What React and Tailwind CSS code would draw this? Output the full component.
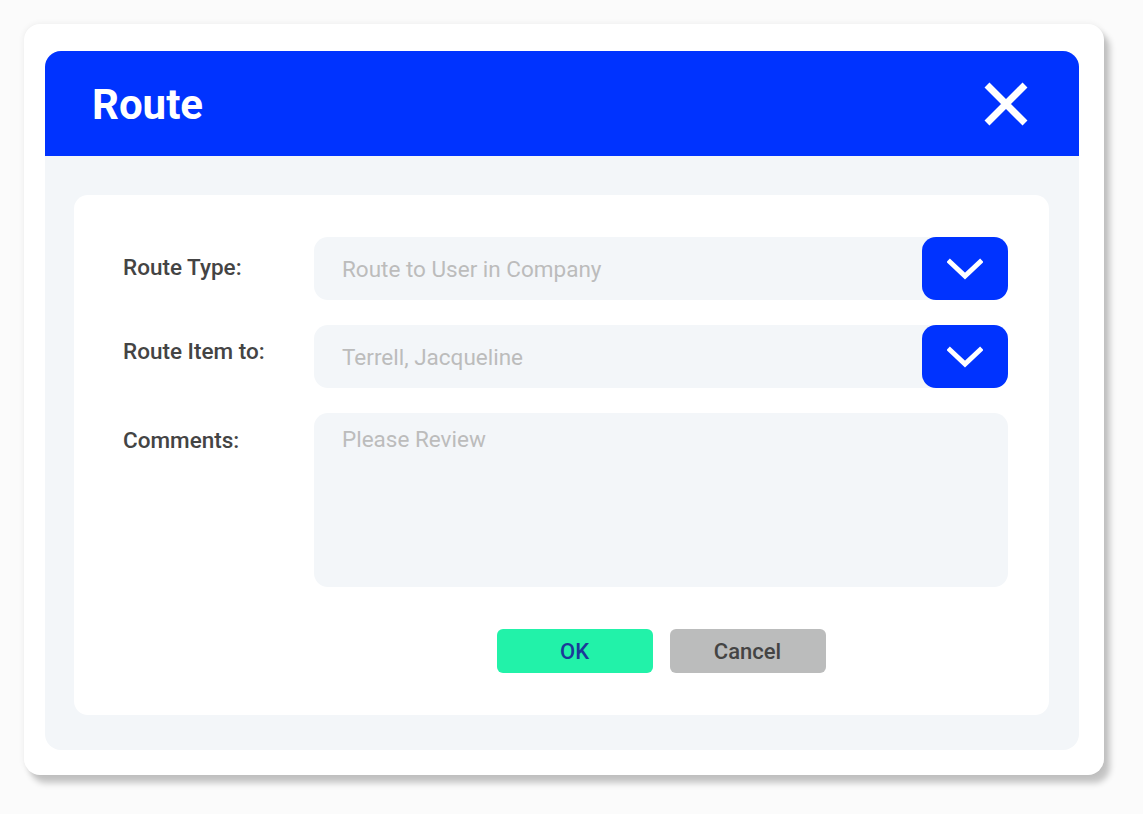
const Chevron = () => (
    <svg width="36" height="22" viewBox="0 0 36 22" fill="none">
        <path d="M3 4 L18 18 L33 4" stroke="white" strokeWidth="5" strokeLinecap="square" />
    </svg>
);

const SelectField = ({ value }) => {
    return (
        <div className="flex h-[63px] flex-1 items-center rounded-[14px] bg-[#f3f6f9]">
            <span className="flex-1 pl-[28px] pt-[3px] text-[22.5px] text-[#bcbcbc]">{value}</span>
            <button className="flex h-[63px] w-[86px] items-center justify-center rounded-[14px] bg-[#0033ff]">
                <Chevron />
            </button>
        </div>
    );
};

const Row = ({ label, pad, children }) => (
    <div className="flex items-start">
        <div className={`w-[191px] shrink-0 text-[22.5px] font-medium leading-[26px] text-[#444] ${pad}`}>{label}</div>
        {children}
    </div>
);

const App = () => {
    return (
        <div className="min-h-screen bg-[#fbfbfb] pl-[24px] pt-[24px]" style={{ fontFamily: 'Roboto, "Liberation Sans", sans-serif' }}>
            <div className="w-[1080px] rounded-[16px] bg-white pb-[25px] pl-[21px] pr-[25px] pt-[27px] shadow-[0_0_6px_rgba(0,0,0,0.07),6px_8px_6px_rgba(0,0,0,0.22)]">
                <div className="overflow-hidden rounded-[16px] bg-[#f3f6f9]">
                    <div className="flex h-[105px] items-center justify-between bg-[#0033ff] pl-[47px] pr-[50px]">
                        <h1 className="pt-[2px] text-[42px] font-bold text-white">Route</h1>
                        <svg width="46" height="46" viewBox="0 0 46 46">
                            <path d="M4 4 L42 42 M42 4 L4 42" stroke="white" strokeWidth="7" />
                        </svg>
                    </div>
                    <div className="pb-[35px] pl-[29px] pr-[30px] pt-[39px]">
                        <div className="rounded-[14px] bg-white pb-[42px] pl-[49px] pr-[41px] pt-[42px]">
                            <div className="flex flex-col gap-[25px]">
                                <Row label="Route Type:" pad="pt-[17px]">
                                    <SelectField value="Route to User in Company" />
                                </Row>
                                <Row label="Route Item to:" pad="pt-[13px]">
                                    <SelectField value="Terrell, Jacqueline" />
                                </Row>
                                <Row label="Comments:" pad="pt-[14px]">
                                    <div className="h-[174px] flex-1 rounded-[14px] bg-[#f3f6f9] pl-[28px] pt-[13px] text-[22.5px] leading-[26px] text-[#bcbcbc]">
                                        Please Review
                                    </div>
                                </Row>
                            </div>
                            <div className="ml-[191px] mt-[42px] flex justify-center gap-[17px]">
                                <button className="h-[44px] w-[156px] rounded-[6px] bg-[#22f2a9] text-[22px] font-medium text-[#1b3a98]">OK</button>
                                <button className="h-[44px] w-[156px] rounded-[6px] bg-[#bbbcbc] text-[22px] font-medium text-[#444]">Cancel</button>
                            </div>
                        </div>
                    </div>
                </div>
            </div>
        </div>
    );
};

export default App;
